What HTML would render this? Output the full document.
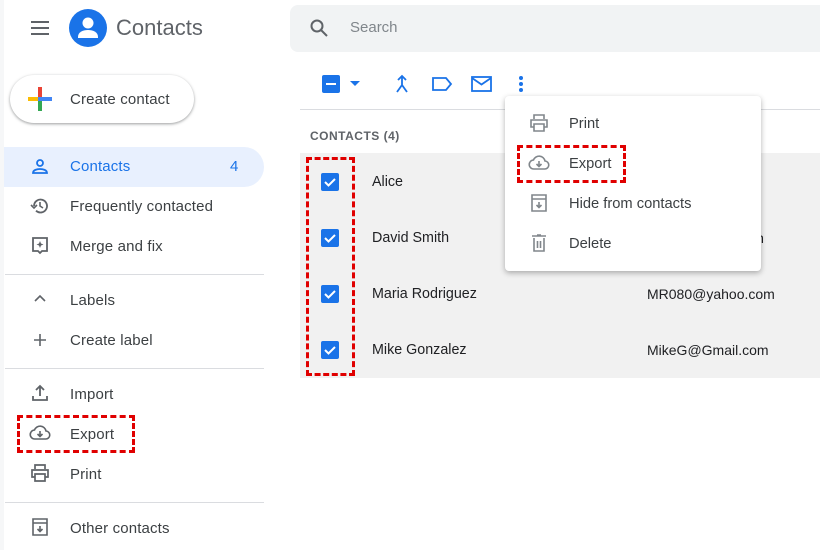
<!DOCTYPE html>
<html><head><style>
*{margin:0;padding:0;box-sizing:border-box}
body{width:820px;height:550px;background:#fff;font-family:"Liberation Sans",Arial,sans-serif;position:relative;overflow:hidden;color:#202124}
.a{position:absolute}
.t{font-size:14px;color:#3c4043}
.s{font-size:15px;letter-spacing:.15px}
.m{font-size:14.7px}
.ic{position:absolute}
.dash{position:absolute;border:3px dashed #e00000}
.cb{position:absolute;left:321px;width:18px;height:18px;background:#1a73e8;border-radius:2px}
.sep{position:absolute;left:5px;width:259px;height:1px;background:#dadce0}
</style></head><body>
<div class="a" style="left:0;top:0;width:4px;height:550px;background:#f6f7f8"></div>
<svg class="ic" style="left:30px;top:18px" width="20" height="20" viewBox="0 0 20 20"><path d="M1 4h18M1 10h18M1 16h18" stroke="#5f6368" stroke-width="2"/></svg>
<svg class="ic" style="left:69px;top:9px" width="38" height="38" viewBox="0 0 38 38"><circle cx="19" cy="19" r="19" fill="#1a73e8"/><circle cx="19" cy="14" r="5.5" fill="#fff"/><path d="M9 28c0-5 5-7 10-7s10 2 10 7v1H9z" fill="#fff"/></svg>
<div class="a" style="left:116px;top:15px;font-size:22px;color:#5f6368">Contacts</div>
<div class="a" style="left:290px;top:5px;width:540px;height:47px;background:#f1f3f4;border-radius:8px"></div>
<svg class="ic" style="left:309px;top:18px" width="20" height="20" viewBox="0 0 20 20"><circle cx="8" cy="8" r="5.5" fill="none" stroke="#5f6368" stroke-width="2"/><path d="M12 12l6 6" stroke="#5f6368" stroke-width="2"/></svg>
<div class="a" style="left:350px;top:19px;font-size:15px;color:#80868b">Search</div>
<div class="a" style="left:10px;top:75px;width:184px;height:48px;border-radius:24px;background:#fff;box-shadow:0 1px 3px rgba(60,64,67,.35),0 1px 2px rgba(60,64,67,.2)"></div>
<svg class="ic" style="left:28px;top:87px" width="24" height="24" viewBox="0 0 24 24"><rect x="10" y="0" width="4" height="10" fill="#ea4335"/><rect x="14" y="10" width="10" height="4" fill="#4285f4"/><rect x="10" y="14" width="4" height="10" fill="#34a853"/><rect x="0" y="10" width="10" height="4" fill="#fbbc04"/><rect x="10" y="10" width="4" height="4" fill="#4285f4"/></svg>
<div class="a t s" style="left:70px;top:91px">Create contact</div>
<div class="a" style="left:4px;top:147px;width:260px;height:40px;background:#e8f0fe;border-radius:0 20px 20px 0"></div>
<svg class="ic" style="left:30px;top:157px" width="20" height="20" viewBox="0 0 20 20"><circle cx="10" cy="6" r="3" fill="none" stroke="#1a73e8" stroke-width="1.8"/><path d="M3 16c0-3 4-4 7-4s7 1 7 4z" fill="none" stroke="#1a73e8" stroke-width="1.8"/></svg>
<div class="a s" style="left:70px;top:158px;color:#1a73e8">Contacts</div>
<div class="a s" style="left:230px;top:158px;color:#1a73e8">4</div>
<svg class="ic" style="left:30px;top:196px" width="20" height="20" viewBox="0 0 20 20"><path d="M4 10a6.5 6.5 0 1 1 2 4.7" fill="none" stroke="#5f6368" stroke-width="1.8"/><path d="M1 9l3 3 3-3" fill="none" stroke="#5f6368" stroke-width="1.6"/><path d="M10 6v4l3 2" fill="none" stroke="#5f6368" stroke-width="1.6"/></svg>
<div class="a t s" style="left:70px;top:198px">Frequently contacted</div>
<svg class="ic" style="left:31px;top:236px" width="18" height="20" viewBox="0 0 18 20"><path d="M2 2h14v13h-5l-2 2-2-2H2z" fill="none" stroke="#5f6368" stroke-width="1.8"/><path d="M9 5l1 2.5 2.5 1-2.5 1L9 12 8 9.5 5.5 8.5 8 7.5z" fill="#5f6368"/></svg>
<div class="a t s" style="left:70px;top:238px">Merge and fix</div>
<div class="sep" style="top:274px"></div>
<svg class="ic" style="left:34px;top:294px" width="12" height="10" viewBox="0 0 12 10"><path d="M1 7l5-5 5 5" fill="none" stroke="#5f6368" stroke-width="1.6"/></svg>
<div class="a t s" style="left:70px;top:292px">Labels</div>
<svg class="ic" style="left:33px;top:333px" width="14" height="14" viewBox="0 0 14 14"><path d="M7 1v12M1 7h12" stroke="#5f6368" stroke-width="1.6"/></svg>
<div class="a t s" style="left:70px;top:332px">Create label</div>
<div class="sep" style="top:368px"></div>
<svg class="ic" style="left:31px;top:384px" width="18" height="18" viewBox="0 0 18 18"><path d="M9 12V2M5 6l4-4 4 4M2 12v4h14v-4" fill="none" stroke="#5f6368" stroke-width="1.8"/></svg>
<div class="a t s" style="left:70px;top:386px">Import</div>
<svg class="ic" style="left:29px;top:425px" width="22" height="16" viewBox="0 0 22 16"><path d="M6 14a4.5 4.5 0 0 1-.5-9A6 6 0 0 1 17 6a4 4 0 0 1-.5 8z" fill="none" stroke="#5f6368" stroke-width="1.6"/><path d="M11 6v5M8.5 9l2.5 2.5L13.5 9" fill="none" stroke="#5f6368" stroke-width="1.6"/></svg>
<div class="a t s" style="left:70px;top:426px">Export</div>
<div class="dash" style="left:17px;top:415px;width:118px;height:38px"></div>
<svg class="ic" style="left:30px;top:464px" width="20" height="18" viewBox="0 0 20 18"><path d="M5 5V1h10v4M5 13H2V6h16v7h-3M5 10h10v7H5z" fill="none" stroke="#5f6368" stroke-width="1.7"/></svg>
<div class="a t s" style="left:70px;top:466px">Print</div>
<div class="sep" style="top:502px"></div>
<svg class="ic" style="left:32px;top:518px" width="16" height="18" viewBox="0 0 16 18"><path d="M1 1h14v16H1zM1 5h14M8 8v5M5.5 11L8 13.5 10.5 11" fill="none" stroke="#5f6368" stroke-width="1.6"/></svg>
<div class="a t s" style="left:70px;top:520px">Other contacts</div>
<div class="a" style="left:322px;top:75px;width:18px;height:18px;background:#1a73e8;border-radius:2px"><div style="position:absolute;left:4px;top:8px;width:10px;height:2px;background:#fff"></div></div>
<svg class="ic" style="left:349px;top:81px" width="12" height="6"><path d="M1 0h10L6 5z" fill="#1a73e8"/></svg>
<svg class="ic" style="left:392px;top:74px" width="20" height="20" viewBox="0 0 20 20"><path d="M10 2v9M6 6l4-4 4 4M10 11l-5 7M10 11l5 7" fill="none" stroke="#1a73e8" stroke-width="1.8"/></svg>
<svg class="ic" style="left:431px;top:76px" width="22" height="16" viewBox="0 0 22 16"><path d="M2 2h13l5 6-5 6H2z" fill="none" stroke="#1a73e8" stroke-width="1.8"/></svg>
<svg class="ic" style="left:471px;top:76px" width="22" height="16" viewBox="0 0 22 16"><rect x="1" y="1" width="19" height="14" fill="none" stroke="#1a73e8" stroke-width="1.8"/><path d="M1 2l9.5 6.5L20 2" fill="none" stroke="#1a73e8" stroke-width="1.8"/></svg>
<svg class="ic" style="left:518px;top:75px" width="6" height="18"><circle cx="3" cy="3" r="2" fill="#1a73e8"/><circle cx="3" cy="9" r="2" fill="#1a73e8"/><circle cx="3" cy="15" r="2" fill="#1a73e8"/></svg>
<div class="a" style="left:300px;top:109px;width:520px;height:1px;background:#dadce0"></div>
<div class="a" style="left:310px;top:129px;font-size:12px;color:#5f6368;font-weight:bold;letter-spacing:.5px">CONTACTS (4)</div>
<div class="a" style="left:300px;top:153px;width:520px;height:225px;background:#f1f1f1"></div>
<div class="cb" style="top:173px"></div><div class="cb" style="top:229px"></div><div class="cb" style="top:285px"></div><div class="cb" style="top:341px"></div>
<svg class="ic" style="left:321px;top:173px" width="18" height="186"><g fill="none" stroke="#fff" stroke-width="2"><path d="M4 9l3.5 3.5L14 6"/><path d="M4 65l3.5 3.5L14 62"/><path d="M4 121l3.5 3.5L14 118"/><path d="M4 177l3.5 3.5L14 174"/></g></svg>
<div class="a t" style="left:372px;top:174px;color:#202124;font-size:14.3px">Alice</div>
<div class="a t" style="left:372px;top:230px;color:#202124;font-size:14.3px">David Smith</div>
<div class="a t" style="left:647px;top:230px;color:#202124">David@Gmail.com</div>
<div class="a t" style="left:372px;top:286px;color:#202124;font-size:14.3px">Maria Rodriguez</div>
<div class="a t" style="left:647px;top:286px;color:#202124">MR080@yahoo.com</div>
<div class="a t" style="left:372px;top:342px;color:#202124;font-size:14.3px">Mike Gonzalez</div>
<div class="a t" style="left:647px;top:342px;color:#202124">MikeG@Gmail.com</div>
<div class="dash" style="left:306px;top:157px;width:49px;height:219px"></div>
<div class="a" style="left:505px;top:96px;width:256px;height:175px;background:#fff;border-radius:4px;box-shadow:0 2px 6px rgba(0,0,0,.3)"></div>
<svg class="ic" style="left:529px;top:114px" width="20" height="18" viewBox="0 0 20 18"><path d="M5 5V1h10v4M5 13H2V6h16v7h-3M5 10h10v7H5z" fill="none" stroke="#80868b" stroke-width="1.6"/></svg>
<div class="a t m" style="left:569px;top:116px">Print</div>
<svg class="ic" style="left:528px;top:155px" width="22" height="16" viewBox="0 0 22 16"><path d="M6 14a4.5 4.5 0 0 1-.5-9A6 6 0 0 1 17 6a4 4 0 0 1-.5 8z" fill="none" stroke="#80868b" stroke-width="1.6"/><path d="M11 6v5M8.5 9l2.5 2.5L13.5 9" fill="none" stroke="#80868b" stroke-width="1.6"/></svg>
<div class="a t m" style="left:569px;top:156px">Export</div>
<div class="dash" style="left:517px;top:145px;width:109px;height:38px"></div>
<svg class="ic" style="left:531px;top:194px" width="16" height="18" viewBox="0 0 16 18"><path d="M1 1h14v16H1zM1 5h14M8 8v5M5.5 11L8 13.5 10.5 11" fill="none" stroke="#80868b" stroke-width="1.6"/></svg>
<div class="a t m" style="left:569px;top:196px">Hide from contacts</div>
<svg class="ic" style="left:532px;top:234px" width="14" height="18" viewBox="0 0 14 18"><path d="M0 2h14M5 1h4M2 4v13h10V4M5.5 7v7M8.5 7v7" fill="none" stroke="#80868b" stroke-width="1.6"/></svg>
<div class="a t m" style="left:569px;top:236px">Delete</div>
</body></html>
